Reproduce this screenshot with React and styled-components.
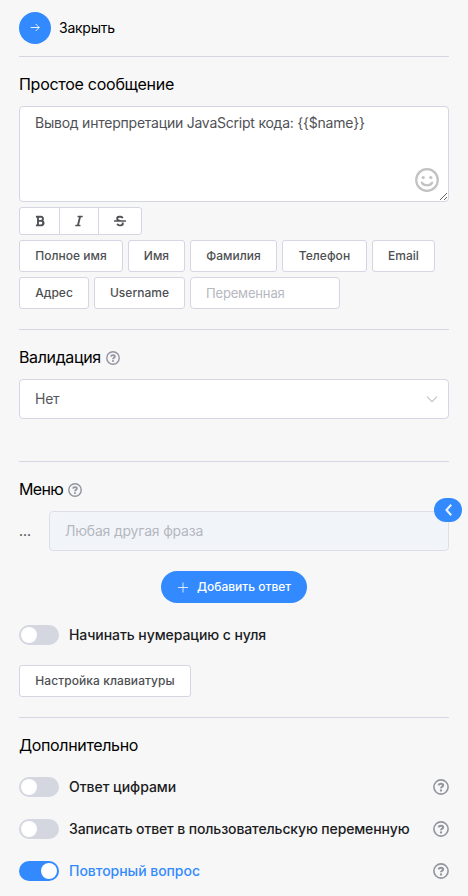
import React from 'react';
import styled, { createGlobalStyle } from 'styled-components';
import { FaBold, FaItalic, FaStrikethrough } from 'react-icons/fa';

const GlobalStyle = createGlobalStyle`
  * { box-sizing: border-box; }
  body {
    margin: 0;
    background: #f7f7f7;
    font-family: Inter, "Liberation Sans", sans-serif;
    color: #000;
  }
  button, input, textarea { font-family: inherit; margin: 0; }
  svg { display: block; flex: none; }
`;

const Panel = styled.main`
  height: 896px;
  padding: 12px 19px 0;
  overflow: hidden;
`;

const Header = styled.header`
  display: flex;
  align-items: center;
  gap: 8px;
  height: 44px;
  padding-bottom: 12px;
`;

const HeaderText = styled.span`
  padding-bottom: 2px;
  font-size: 14px;
  letter-spacing: -0.25px;
`;

const CloseButton = styled.button`
  display: flex;
  align-items: center;
  justify-content: center;
  width: 32px;
  height: 32px;
  padding: 0 0 1px;
  border: 0;
  border-radius: 50%;
  background: #338aff;
  color: #fff;
`;

const Section = styled.section`
  height: ${(p) => p.$height}px;
  padding-top: 16px;
  border-top: 1px solid #d4d6e3;
`;

const Title = styled.h2`
  display: flex;
  align-items: center;
  gap: 5px;
  height: 24px;
  margin: 0 0 9px;
  font-size: 16px;
  font-weight: 400;
`;

const TitleText = styled.span`
  padding-bottom: 2px;
  line-height: 22px;
  letter-spacing: ${(p) => p.$tracking || -0.27}px;
`;

const Editor = styled.div`
  position: relative;
  height: 96px;
`;

const TextArea = styled.textarea`
  display: block;
  width: 100%;
  height: 96px;
  padding: 5px 15px;
  border: 1px solid #d4d6e3;
  border-radius: 4px;
  outline: 0;
  background: #fff;
  color: #505156;
  font-size: 14px;
  line-height: 21px;
  letter-spacing: -0.23px;
  resize: vertical;
`;

const EmojiButton = styled.span`
  position: absolute;
  right: 10px;
  bottom: 10px;
  color: #c2c2c2;
`;

const FormatGroup = styled.div`
  display: flex;
  width: 123px;
  height: 28px;
  margin: 5px 0;
  border: 1px solid #d4d6e3;
  border-radius: 3px;
  background: #fff;
`;

const FormatButton = styled.button`
  display: flex;
  align-items: center;
  justify-content: center;
  width: ${(p) => p.$width}px;
  padding: 0;
  border: 0;
  border-right: ${(p) => (p.$last ? '0' : '1px solid #d4d6e3')};
  background: none;
  color: #505156;
`;

const Variables = styled.div`
  display: flex;
  flex-wrap: wrap;
  gap: 5px;
`;

const Button = styled.button`
  width: ${(p) => p.$width}px;
  height: 32px;
  padding: 0 0 1px;
  border: 1px solid #d4d6e3;
  border-radius: 3px;
  background: #fff;
  color: #4e4f53;
  font-size: 12px;
  font-weight: 500;
  letter-spacing: ${(p) => p.$tracking || 0.02}px;
  white-space: nowrap;
`;

const VariableInput = styled.input`
  width: 150px;
  height: 32px;
  padding: 0 15px;
  border: 1px solid #d4d6e3;
  border-radius: 4px;
  outline: 0;
  background: #fff;
  font-size: 13px;
  letter-spacing: -0.17px;
  &::placeholder { color: #b6b8c1; }
`;

const Select = styled.div`
  display: flex;
  align-items: center;
  justify-content: space-between;
  height: 40px;
  padding: 0 10px 0 15px;
  border: 1px solid #d4d6e3;
  border-radius: 4px;
  background: #fff;
`;

const SelectValue = styled.span`
  padding-bottom: 2px;
  color: #55575c;
  font-size: 14px;
  letter-spacing: -0.25px;
`;

const MenuRow = styled.div`
  position: relative;
  display: flex;
  align-items: center;
  height: 40px;
`;

const Ellipsis = styled.span`
  width: 30px;
  padding-bottom: 1px;
  color: #333;
  font-size: 14px;
`;

const PhraseInput = styled.input`
  flex: 1;
  height: 40px;
  padding: 0 15px 2px;
  border: 1px solid #dcdfe8;
  border-radius: 4px;
  background: #f1f5fa;
  font-size: 14px;
  letter-spacing: -0.2px;
  &::placeholder { color: #b5b7bf; }
`;

const CollapseTab = styled.button`
  position: absolute;
  top: -13px;
  right: -13px;
  display: flex;
  align-items: center;
  justify-content: center;
  width: 28px;
  height: 24px;
  padding: 0 0 0 1px;
  border: 0;
  border-radius: 12px;
  background: #338aff;
  color: #fff;
`;

const AddRow = styled.div`
  display: flex;
  justify-content: center;
  padding: 20px 0 22px;
`;

const AddButton = styled.button`
  display: flex;
  align-items: center;
  gap: 8px;
  width: 146px;
  height: 32px;
  padding: 0 0 0 16px;
  border: 0;
  border-radius: 16px;
  background: #338aff;
  color: #fff;
`;

const AddText = styled.span`
  padding-bottom: 2px;
  font-size: 12px;
  font-weight: 500;
  white-space: nowrap;
`;

const Option = styled.div`
  display: flex;
  align-items: center;
  height: 20px;
  margin-bottom: ${(p) => p.$gap}px;
`;

const OptionLabel = styled.span`
  flex: 1;
  margin-left: 10px;
  padding-bottom: 2px;
  color: ${(p) => (p.$on ? '#338aff' : '#1b1c1f')};
  font-size: 14px;
  font-weight: 500;
  letter-spacing: ${(p) => p.$tracking}px;
  white-space: nowrap;
`;

const Track = styled.span`
  display: flex;
  align-items: center;
  justify-content: ${(p) => (p.$on ? 'flex-end' : 'flex-start')};
  width: 40px;
  height: 20px;
  padding: 0 2px;
  border-radius: 10px;
  background: ${(p) => (p.$on ? '#338aff' : '#d4d6e0')};
`;

const Thumb = styled.span`
  width: 16px;
  height: 16px;
  border-radius: 50%;
  background: #fff;
`;

const ExtraList = styled.div`
  padding-top: 10px;
`;

const HelpIcon = ({ size }) => (
  <svg width={size} height={size} viewBox="0 0 16 16" fill="none" stroke="#9294a0">
    <circle cx="8" cy="8" r="7.1" strokeWidth="1.6" />
    <path d="M5.7 6.4C5.8 5.1 6.7 4.7 8 4.7c1.3 0 2.2.6 2.2 1.6C10.2 7.7 8 7.6 8 9.3" strokeWidth="2" />
    <circle cx="8" cy="11.5" r="1.15" fill="#9294a0" stroke="none" />
  </svg>
);

const ArrowIcon = () => (
  <svg width="10" height="9" viewBox="0 0 10 9" fill="none" stroke="currentColor" strokeWidth="0.9">
    <path d="M.6 4.5h8.7M5.7 1 9.2 4.5 5.7 8" />
  </svg>
);

const SmileIcon = () => (
  <svg width="24" height="24" viewBox="0 0 24 24" fill="none" stroke="currentColor" strokeWidth="2.2">
    <circle cx="12" cy="12" r="10.8" />
    <path d="M6.8 14.6c2 3.5 8.4 3.5 10.4 0" strokeLinecap="round" />
    <circle cx="8.2" cy="9.5" r="1.6" fill="currentColor" stroke="none" />
    <circle cx="15.8" cy="9.5" r="1.6" fill="currentColor" stroke="none" />
  </svg>
);

const ChevronDown = () => (
  <svg width="12" height="7" viewBox="0 0 12 7" fill="none" stroke="#c0c4cc" strokeWidth="1.1">
    <path d="m1 .6 5 5 5-5" />
  </svg>
);

const ChevronLeft = () => (
  <svg width="7" height="12" viewBox="0 0 7 12" fill="none" stroke="#e8f1ff" strokeWidth="2.1">
    <path d="M6.2.8 1.5 6l4.7 5.2" />
  </svg>
);

const PlusIcon = () => (
  <svg width="12" height="12" viewBox="0 0 12 12" stroke="currentColor" strokeWidth="0.8">
    <path d="M1 6.5h10M6 1.5v10" />
  </svg>
);

const variables = [
  ['Полное имя', 104],
  ['Имя', 57],
  ['Фамилия', 87],
  ['Телефон', 85],
  ['Email', 63],
  ['Адрес', 70],
  ['Username', 91],
];

const extras = [
  { label: 'Ответ цифрами', tracking: -0.03 },
  { label: 'Записать ответ в пользовательскую переменную', tracking: -0.13 },
  { label: 'Повторный вопрос', on: true, tracking: -0.04 },
];

const Switch = ({ on }) => (
  <Track $on={on} role="switch" aria-checked={!!on}>
    <Thumb />
  </Track>
);

export default function App() {
  return (
    <>
      <GlobalStyle />
      <Panel>
        <Header>
          <CloseButton aria-label="Закрыть"><ArrowIcon /></CloseButton>
          <HeaderText>Закрыть</HeaderText>
        </Header>

        <Section $height={273}>
          <Title><TitleText>Простое сообщение</TitleText></Title>
          <Editor>
            <TextArea spellCheck={false} defaultValue="Вывод интерпретации JavaScript кода: {{$name}}" />
            <EmojiButton><SmileIcon /></EmojiButton>
          </Editor>
          <FormatGroup>
            <FormatButton $width={40}><FaBold size={12} /></FormatButton>
            <FormatButton $width={39}><FaItalic size={12} /></FormatButton>
            <FormatButton $width={42} $last><FaStrikethrough size={12} /></FormatButton>
          </FormatGroup>
          <Variables>
            {variables.map(([name, width]) => (
              <Button key={name} $width={width}>{name}</Button>
            ))}
            <VariableInput placeholder="Переменная" />
          </Variables>
        </Section>

        <Section $height={132}>
          <Title><TitleText $tracking={-0.36}>Валидация</TitleText><HelpIcon size={14} /></Title>
          <Select><SelectValue>Нет</SelectValue><ChevronDown /></Select>
        </Section>

        <Section $height={256}>
          <Title><TitleText $tracking={-0.7}>Меню</TitleText><HelpIcon size={14} /></Title>
          <MenuRow>
            <Ellipsis>...</Ellipsis>
            <PhraseInput placeholder="Любая другая фраза" disabled />
            <CollapseTab aria-label="Свернуть"><ChevronLeft /></CollapseTab>
          </MenuRow>
          <AddRow>
            <AddButton><PlusIcon /><AddText>Добавить ответ</AddText></AddButton>
          </AddRow>
          <Option $gap={20}>
            <Switch />
            <OptionLabel $tracking={-0.07}>Начинать нумерацию с нуля</OptionLabel>
          </Option>
          <Button $width={172} $tracking={0.08}>Настройка клавиатуры</Button>
        </Section>

        <Section $height={179}>
          <Title><TitleText $tracking={-0.35}>Дополнительно</TitleText></Title>
          <ExtraList>
            {extras.map(({ label, on, tracking }) => (
              <Option key={label} $gap={22}>
                <Switch on={on} />
                <OptionLabel $on={on} $tracking={tracking}>{label}</OptionLabel>
                <HelpIcon size={16} />
              </Option>
            ))}
          </ExtraList>
        </Section>
      </Panel>
    </>
  );
}
